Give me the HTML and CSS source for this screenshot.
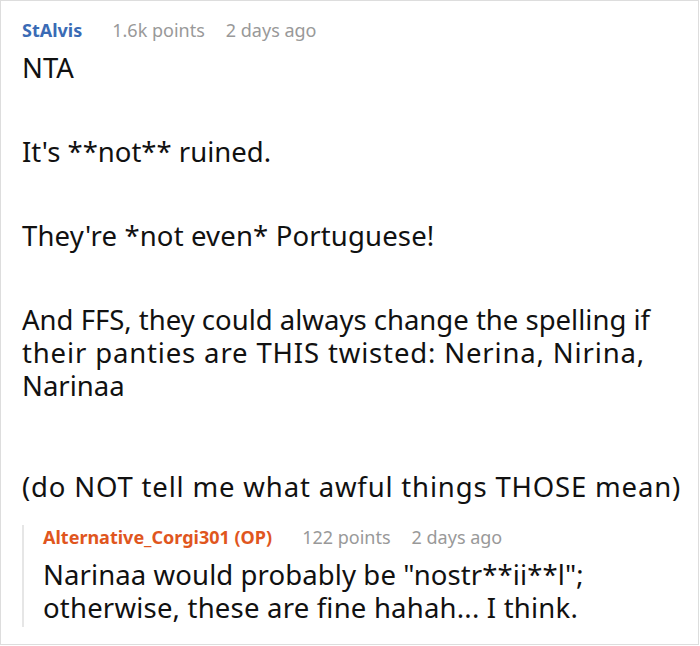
FILE: index.html
```html
<!DOCTYPE html>
<html lang="en">
<head>
<meta charset="utf-8">
<title>Comment</title>
<link rel="stylesheet" href="styles.css">
</head>
<body>
<div class="comment">
  <div class="meta">
    <span class="author">StAlvis</span>
    <span class="info">1.6k points</span>
    <span class="info">2 days ago</span>
  </div>
  <div class="body">
    <p>NTA</p>
    <p>It's **not** ruined.</p>
    <p class="pt">They're *not even* Portuguese!</p>
    <p><span class="sp1">And FFS, they could always change the spelling if</span> <span class="sp2">their panties are THIS twisted: Nerina, Nirina,</span> Narinaa</p>
    <p class="wide last">(do NOT tell me what awful things THOSE mean)</p>
  </div>
  <div class="reply">
    <div class="meta">
      <span class="author op">Alternative_Corgi301 (OP)</span>
      <span class="info">122 points</span>
      <span class="info">2 days ago</span>
    </div>
    <div class="body reply-body">
      <p><span class="rp1">Narinaa would probably be "nostr**ii**l";</span> <span class="rp2">otherwise, these are fine hahah... I think.</span></p>
    </div>
  </div>
</div>
</body>
</html>
```
FILE: styles.css
```css
html, body {
  margin: 0;
  padding: 0;
  background: #ffffff;
}
body {
  font-family: "Noto Sans", "Open Sans", "DejaVu Sans", sans-serif;
  color: #111111;
}
.comment {
  box-sizing: border-box;
  width: 699px;
  height: 645px;
  border: 1px solid #dddddd;
  padding: 17px 8px 0 21px;
  overflow: hidden;
}
.meta {
  display: flex;
  align-items: baseline;
  gap: 21px;
  font-size: 18px;
  line-height: 24px;
}
.author {
  font-weight: 700;
  color: #3a6bb5;
  margin-right: 9px;
}
.info {
  color: #999999;
}
.body {
  margin-top: 9px;
}
.body p {
  margin: 0;
  font-size: 27.5px;
  line-height: 33px;
}
.body p + p {
  margin-top: 51px;
}
.body p.pt {
  letter-spacing: 0.15px;
}
.sp1 {
  letter-spacing: 0px;
}
.sp2 {
  letter-spacing: 0.85px;
}
.body p.wide {
  letter-spacing: 0.83px;
}
.body p.last {
  margin-top: 68px;
}
.reply {
  margin-top: 22px;
  border-left: 2px solid #e6e6e6;
  padding: 0 0 3px 19px;
}
.author.op {
  color: #e0561e;
}
.reply-body {
  max-width: 610px;
}
.rp1 {
  letter-spacing: 0.1px;
}
.rp2 {
  letter-spacing: 0.2px;
}
```
